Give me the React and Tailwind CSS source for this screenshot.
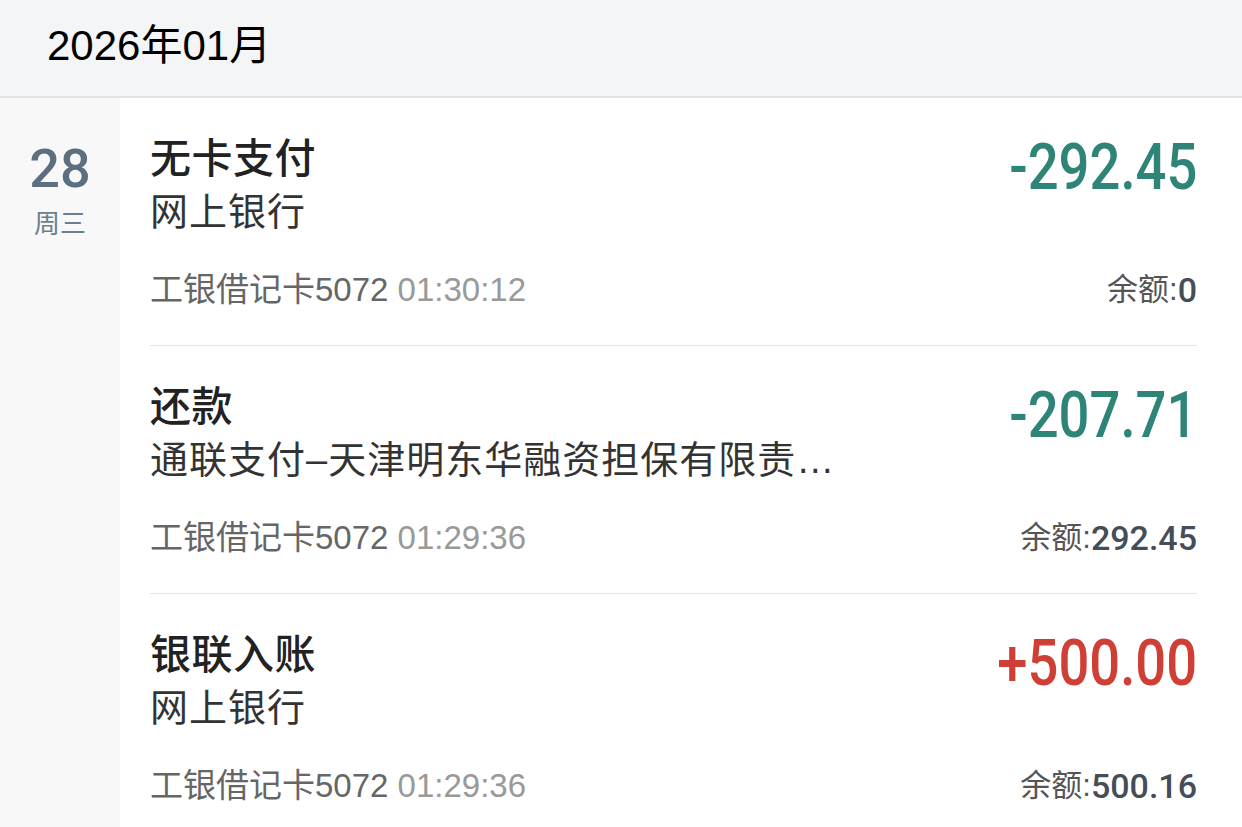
import React from 'react';

const rows = [
  { title: '无卡支付', sub: '网上银行', card: '工银借记卡5072', time: '01:30:12', amount: '-292.45', out: true, balance: '0' },
  { title: '还款', sub: '通联支付–天津明东华融资担保有限责任公司', card: '工银借记卡5072', time: '01:29:36', amount: '-207.71', out: true, balance: '292.45' },
  { title: '银联入账', sub: '网上银行', card: '工银借记卡5072', time: '01:29:36', amount: '+500.00', out: false, balance: '500.16' },
];

const cjk = { fontFamily: '"Liberation Sans", "Noto Sans CJK SC", sans-serif' };
const num = { fontFamily: 'Roboto, "Noto Sans CJK SC", sans-serif' };

function Row({ r, last }) {
  return (
    <div className={`pt-[35px] pb-[33px] ${last ? '' : 'border-b border-[#e6e6e6]'}`}>
      <div className="flex justify-between items-start">
        <div className="w-[694px] min-w-0">
          <div className="text-[41px] leading-[52px] font-medium text-[#222] tracking-[0.5px]">{r.title}</div>
          <div className="text-[38px] leading-[54px] text-[#333] tracking-[1px] truncate">{r.sub}</div>
        </div>
        <div style={num} className={`text-[64px] leading-[70px] font-medium scale-x-85 origin-right ${r.out ? 'text-[#2e8577]' : 'text-[#cf3f35]'}`}>
          {r.amount}
        </div>
      </div>
      <div className="flex justify-between items-center mt-[29px] h-[44px]">
        <div className="text-[33px] text-[#666]">
          {r.card} <span className="text-[#999]">{r.time}</span>
        </div>
        <div className="text-[31px] text-[#555] flex items-center">
          余额:<span style={num} className="text-[34px] font-medium text-[#454d57]">{r.balance}</span>
        </div>
      </div>
    </div>
  );
}

export default function App() {
  return (
    <div style={cjk} className="w-[1242px] h-[827px] overflow-hidden bg-white">
      <div className="h-[98px] bg-[#f4f5f7] border-b-2 border-[#e3e3e3] flex items-center pl-[47px] pb-[5px]">
        <span className="text-[42px] text-black">2026年01月</span>
      </div>
      <div className="flex">
        <div className="w-[120px] bg-[#f8f8f8] flex flex-col items-center pt-[41px] shrink-0">
          <div style={num} className="text-[54px] leading-[60px] font-medium text-[#5b6f80]">28</div>
          <div className="text-[26px] leading-[34px] text-[#6b7f8e] mt-[8px]">周三</div>
        </div>
        <div className="flex-1 pl-[30px] pr-[45px]">
          {rows.map((r, i) => (
            <Row key={i} r={r} last={i === rows.length - 1} />
          ))}
        </div>
      </div>
    </div>
  );
}
